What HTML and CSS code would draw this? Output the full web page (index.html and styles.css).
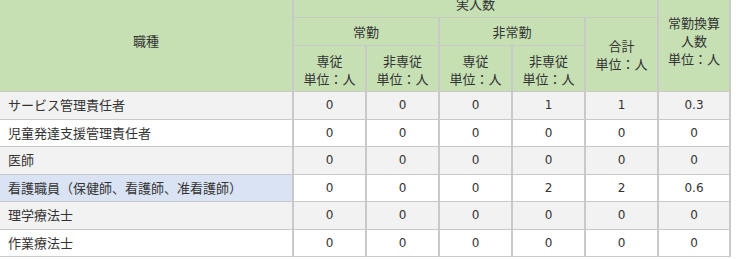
FILE: index.html
```html
<!DOCTYPE html>
<html lang="ja">
<head>
<meta charset="utf-8">
<link rel="stylesheet" href="styles.css">
</head>
<body>
<div class="wrap">
<table class="staff">
  <colgroup>
    <col class="c-name">
    <col class="c-num"><col class="c-num"><col class="c-num"><col class="c-num"><col class="c-num">
    <col class="c-last">
  </colgroup>
  <thead>
    <tr class="h1">
      <th rowspan="3" class="first">職種</th>
      <th colspan="5">実人数</th>
      <th rowspan="3" class="last">常勤換算<br>人数<br>単位：人</th>
    </tr>
    <tr class="h2">
      <th colspan="2">常勤</th>
      <th colspan="2">非常勤</th>
      <th rowspan="2">合計<br>単位：人</th>
    </tr>
    <tr class="h3">
      <th>専従<br>単位：人</th>
      <th>非専従<br>単位：人</th>
      <th>専従<br>単位：人</th>
      <th>非専従<br>単位：人</th>
    </tr>
  </thead>
  <tbody>
    <tr class="odd"><td class="first">サービス管理責任者</td><td>0</td><td>0</td><td>0</td><td>1</td><td>1</td><td class="last">0.3</td></tr>
    <tr><td class="first">児童発達支援管理責任者</td><td>0</td><td>0</td><td>0</td><td>0</td><td>0</td><td class="last">0</td></tr>
    <tr class="odd"><td class="first">医師</td><td>0</td><td>0</td><td>0</td><td>0</td><td>0</td><td class="last">0</td></tr>
    <tr><td class="first hl">看護職員（保健師、看護師、准看護師）</td><td>0</td><td>0</td><td>0</td><td>2</td><td>2</td><td class="last">0.6</td></tr>
    <tr class="odd"><td class="first">理学療法士</td><td>0</td><td>0</td><td>0</td><td>0</td><td>0</td><td class="last">0</td></tr>
    <tr><td class="first">作業療法士</td><td>0</td><td>0</td><td>0</td><td>0</td><td>0</td><td class="last">0</td></tr>
  </tbody>
</table>
</div>
</body>
</html>
```

FILE: styles.css
```css
html, body {
  margin: 0;
  padding: 0;
  background: #ffffff;
}

.wrap {
  margin-top: -10px;
}

.staff {
  border-collapse: separate;
  border-spacing: 0;
  table-layout: fixed;
  width: 731px;
  font-family: "DejaVu Sans", "Noto Sans CJK JP", sans-serif;
  font-size: 12px;
  color: #333333;
}

.c-name { width: 292px; }
.c-num { width: 73px; }
.c-last { width: 74px; }

.staff th,
.staff td {
  box-sizing: border-box;
  border-left: 2px solid #c9c9c9;
  border-bottom: 1px solid #c9c9c9;
  padding: 0 4px;
  text-align: center;
  vertical-align: middle;
  font-weight: normal;
  line-height: 18px;
}

.staff th {
  background: #c6e0b4;
  font-family: "Noto Sans CJK JP", sans-serif;
  font-size: 13px;
}

.h3 th {
  padding-top: 3px;
}

.staff .first {
  border-left: none;
}

.staff .last {
  border-right: 2px solid #c9c9c9;
}

.h1 th { height: 28px; }
.h2 th { height: 28px; }
.h3 th { height: 46px; }

.staff td {
  height: 27.5px;
  background: #ffffff;
}

.staff tr.odd td {
  background: #f2f2f2;
}

.staff td.first {
  text-align: left;
  padding-left: 8px;
  font-family: "Noto Sans CJK JP", sans-serif;
  font-size: 13px;
  font-feature-settings: "pkna";
}

.staff td.hl {
  background: #dae3f3;
}
```
